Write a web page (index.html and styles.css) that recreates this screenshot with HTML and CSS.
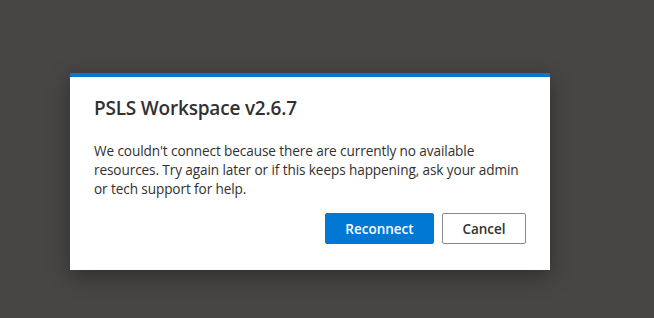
FILE: index.html
```html
<!DOCTYPE html>
<html lang="en">
<head>
  <meta charset="UTF-8" />
  <meta name="viewport" content="width=device-width, initial-scale=1.0"/>
  <title>PSLS Workspace</title>
  <link rel="stylesheet" href="styles.css">
</head>
<body>
  <div class="dialog">
    <h1>PSLS Workspace v2.6.7</h1>
    <p>We couldn't connect because there are currently no available resources. Try again later or if this keeps happening, ask your admin or tech support for help.</p>
    <div class="actions">
      <button class="btn primary">Reconnect</button>
      <button class="btn">Cancel</button>
    </div>
  </div>
</body>
</html>
```

FILE: styles.css
```css
html, body { margin:0; height:100%; }
body { background:#484644; font-family:"Open Sans", "Noto Sans", sans-serif; color:#323130; padding-top:73px; box-sizing:border-box; }
.dialog { width:480px; margin-left:70px; background:#fff; border-top:4px solid #0078d4; box-sizing:border-box; padding:18px 24px 26px; box-shadow:0 6px 20px rgba(0,0,0,0.35); }
h1 { font-size:19px; font-weight:600; margin:0 0 20px; line-height:26px; letter-spacing:-0.2px; }
p { font-size:13.6px; line-height:19px; margin:0 0 15px; letter-spacing:-0.1px; }
.actions { display:flex; justify-content:flex-end; gap:8px; }
.btn { font-family:inherit; font-size:13.5px; font-weight:600; height:31px; padding:0; border:1px solid #8a8886; background:#fff; color:#323130; border-radius:2px; width:84px; cursor:pointer; }
.btn.primary { background:#0078d4; border-color:#0078d4; color:#fff; width:109px; }
```
